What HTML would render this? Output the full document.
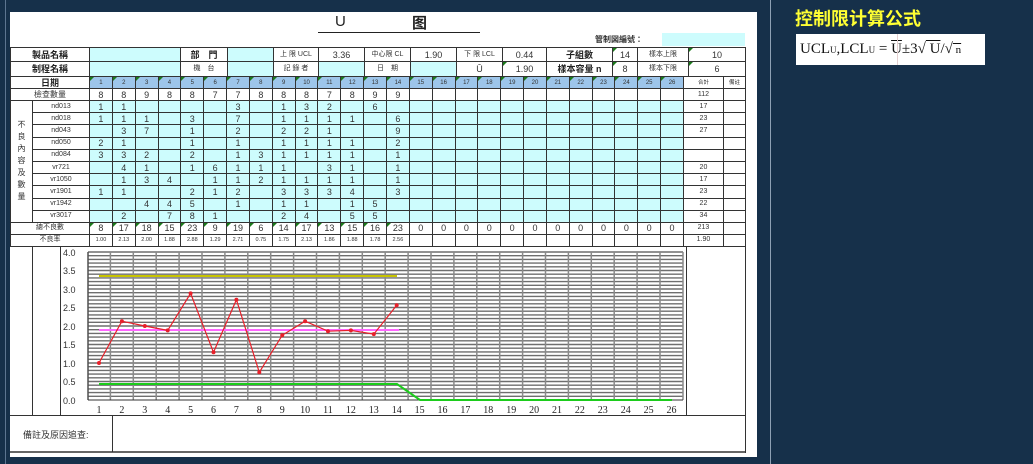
<!DOCTYPE html>
<html><head><meta charset="utf-8">
<style>
*{margin:0;padding:0;box-sizing:border-box}
body{width:1033px;height:464px;background:#16304a;position:relative;overflow:hidden;font-family:"Liberation Sans","Noto Sans CJK TC",sans-serif}
.panel{position:absolute;left:10px;top:12px;width:747px;height:445px;background:#fff}
table{border-collapse:collapse;table-layout:fixed;position:absolute;font-size:9px;color:#333}
td{border:1px solid #333;text-align:center;padding:0;overflow:hidden;white-space:nowrap;line-height:10px;position:relative}
.c{background:#cdfcfd}
.b{background:#9dc5ea;font-size:6px}
.t::before{content:"";position:absolute;left:0;top:0;border-top:4px solid #1a7a1a;border-right:4px solid transparent}
.h{font-size:9px;font-weight:bold;color:#222}
.s{font-size:7px}
.xs{font-size:5.5px}
</style></head><body>
<div style="position:absolute;left:5px;top:0;width:1px;height:464px;background:#5d7590"></div>
<div style="position:absolute;left:770px;top:0;width:1px;height:464px;background:#8ea0b4"></div>
<div class="panel"></div>
<div style="position:absolute;left:335px;top:13px;font-size:15px;color:#222">U</div>
<div style="position:absolute;left:412px;top:12px;font-size:15px;font-weight:bold;color:#222;font-family:'Noto Sans CJK SC',sans-serif">图</div>
<div style="position:absolute;left:318px;top:32px;width:162px;height:1px;background:#222"></div>
<div style="position:absolute;left:595px;top:34px;font-size:8px;font-weight:bold;color:#333">管制図編號：</div>
<div style="position:absolute;left:662px;top:33px;width:83px;height:13px;background:#cdfcfd"></div>

<table style="left:10px;top:47px;width:735px">
<colgroup><col style="width:79px"><col style="width:91px"><col style="width:47px"><col style="width:46px"><col style="width:45px"><col style="width:46px"><col style="width:46px"><col style="width:46px"><col style="width:46px"><col style="width:44px"><col style="width:66px"><col style="width:25px"><col style="width:51px"><col style="width:57px"></colgroup>
<tr style="height:14px"><td class="h">製品名稱</td><td class="c"></td><td class="h">部　門</td><td class="c"></td><td class="s">上 限 UCL</td><td>3.36</td><td class="s">中心限 CL</td><td>1.90</td><td class="s">下 限 LCL</td><td>0.44</td><td class="h">子組數</td><td class="t">14</td><td class="s">樣本上限</td><td class="t">10</td></tr>
<tr style="height:15px"><td class="h">制程名稱</td><td class="c"></td><td class="s">機　台</td><td class="c"></td><td class="s">記 錄 者</td><td class="c"></td><td class="s">日　期</td><td class="c"></td><td>Ū</td><td class="t">1.90</td><td class="h">樣本容量 n</td><td class="t">8</td><td class="s">樣本下限</td><td class="t">6</td></tr>
</table>

<table style="left:10px;top:76px;width:735px">
<colgroup><col style="width:22px"><col style="width:57px">
<col style="width:22.85px"><col style="width:22.85px"><col style="width:22.85px"><col style="width:22.85px"><col style="width:22.85px"><col style="width:22.85px"><col style="width:22.85px"><col style="width:22.85px"><col style="width:22.85px"><col style="width:22.85px"><col style="width:22.85px"><col style="width:22.85px"><col style="width:22.85px"><col style="width:22.85px"><col style="width:22.85px"><col style="width:22.85px"><col style="width:22.85px"><col style="width:22.85px"><col style="width:22.85px"><col style="width:22.85px"><col style="width:22.85px"><col style="width:22.85px"><col style="width:22.85px"><col style="width:22.85px"><col style="width:22.85px"><col style="width:22.85px">
<col style="width:40px"><col style="width:22px"></colgroup>
<tr style="height:12px"><td colspan="2" class="h">日期</td><td class="b t">1</td><td class="b t">2</td><td class="b t">3</td><td class="b t">4</td><td class="b t">5</td><td class="b t">6</td><td class="b t">7</td><td class="b t">8</td><td class="b t">9</td><td class="b t">10</td><td class="b t">11</td><td class="b t">12</td><td class="b t">13</td><td class="b t">14</td><td class="b t">15</td><td class="b t">16</td><td class="b t">17</td><td class="b t">18</td><td class="b t">19</td><td class="b t">20</td><td class="b t">21</td><td class="b t">22</td><td class="b t">23</td><td class="b t">24</td><td class="b t">25</td><td class="b t">26</td><td class="xs">合計</td><td class="xs">備註</td></tr>
<tr style="height:12px"><td colspan="2" style="font-size:8px">檢查數量</td><td>8</td><td>8</td><td>9</td><td>8</td><td>8</td><td>7</td><td>7</td><td>8</td><td>8</td><td>8</td><td>7</td><td>8</td><td>9</td><td>9</td><td></td><td></td><td></td><td></td><td></td><td></td><td></td><td></td><td></td><td></td><td></td><td></td><td class="s">112</td><td></td></tr>
<tr style="height:12.2px"><td rowspan="10" style="font-size:8px;line-height:12px;white-space:normal;padding-top:0">不<br>良<br>內<br>容<br>及<br>數<br>量</td><td class="s">nd013</td><td class="c">1</td><td class="c">1</td><td class="c"></td><td class="c"></td><td class="c"></td><td class="c"></td><td class="c">3</td><td class="c"></td><td class="c">1</td><td class="c">3</td><td class="c">2</td><td class="c"></td><td class="c">6</td><td class="c"></td><td class="c"></td><td class="c"></td><td class="c"></td><td class="c"></td><td class="c"></td><td class="c"></td><td class="c"></td><td class="c"></td><td class="c"></td><td class="c"></td><td class="c"></td><td class="c"></td><td class="s">17</td><td></td></tr>
<tr style="height:12.2px"><td class="s">nd018</td><td class="c">1</td><td class="c">1</td><td class="c">1</td><td class="c"></td><td class="c">3</td><td class="c"></td><td class="c">7</td><td class="c"></td><td class="c">1</td><td class="c">1</td><td class="c">1</td><td class="c">1</td><td class="c"></td><td class="c">6</td><td class="c"></td><td class="c"></td><td class="c"></td><td class="c"></td><td class="c"></td><td class="c"></td><td class="c"></td><td class="c"></td><td class="c"></td><td class="c"></td><td class="c"></td><td class="c"></td><td class="s">23</td><td></td></tr>
<tr style="height:12.2px"><td class="s">nd043</td><td class="c"></td><td class="c">3</td><td class="c">7</td><td class="c"></td><td class="c">1</td><td class="c"></td><td class="c">2</td><td class="c"></td><td class="c">2</td><td class="c">2</td><td class="c">1</td><td class="c"></td><td class="c"></td><td class="c">9</td><td class="c"></td><td class="c"></td><td class="c"></td><td class="c"></td><td class="c"></td><td class="c"></td><td class="c"></td><td class="c"></td><td class="c"></td><td class="c"></td><td class="c"></td><td class="c"></td><td class="s">27</td><td></td></tr>
<tr style="height:12.2px"><td class="s">nd050</td><td class="c">2</td><td class="c">1</td><td class="c"></td><td class="c"></td><td class="c">1</td><td class="c"></td><td class="c">1</td><td class="c"></td><td class="c">1</td><td class="c">1</td><td class="c">1</td><td class="c">1</td><td class="c"></td><td class="c">2</td><td class="c"></td><td class="c"></td><td class="c"></td><td class="c"></td><td class="c"></td><td class="c"></td><td class="c"></td><td class="c"></td><td class="c"></td><td class="c"></td><td class="c"></td><td class="c"></td><td></td><td></td></tr>
<tr style="height:12.2px"><td class="s">nd084</td><td class="c">3</td><td class="c">3</td><td class="c">2</td><td class="c"></td><td class="c">2</td><td class="c"></td><td class="c">1</td><td class="c">3</td><td class="c">1</td><td class="c">1</td><td class="c">1</td><td class="c">1</td><td class="c"></td><td class="c">1</td><td class="c"></td><td class="c"></td><td class="c"></td><td class="c"></td><td class="c"></td><td class="c"></td><td class="c"></td><td class="c"></td><td class="c"></td><td class="c"></td><td class="c"></td><td class="c"></td><td></td><td></td></tr>
<tr style="height:12.2px"><td class="s">vr721</td><td class="c"></td><td class="c">4</td><td class="c">1</td><td class="c"></td><td class="c">1</td><td class="c">6</td><td class="c">1</td><td class="c">1</td><td class="c">1</td><td class="c"></td><td class="c">3</td><td class="c">1</td><td class="c"></td><td class="c">1</td><td class="c"></td><td class="c"></td><td class="c"></td><td class="c"></td><td class="c"></td><td class="c"></td><td class="c"></td><td class="c"></td><td class="c"></td><td class="c"></td><td class="c"></td><td class="c"></td><td class="s">20</td><td></td></tr>
<tr style="height:12.2px"><td class="s">vr1050</td><td class="c"></td><td class="c">1</td><td class="c">3</td><td class="c">4</td><td class="c"></td><td class="c">1</td><td class="c">1</td><td class="c">2</td><td class="c">1</td><td class="c">1</td><td class="c">1</td><td class="c">1</td><td class="c"></td><td class="c">1</td><td class="c"></td><td class="c"></td><td class="c"></td><td class="c"></td><td class="c"></td><td class="c"></td><td class="c"></td><td class="c"></td><td class="c"></td><td class="c"></td><td class="c"></td><td class="c"></td><td class="s">17</td><td></td></tr>
<tr style="height:12.2px"><td class="s">vr1901</td><td class="c">1</td><td class="c">1</td><td class="c"></td><td class="c"></td><td class="c">2</td><td class="c">1</td><td class="c">2</td><td class="c"></td><td class="c">3</td><td class="c">3</td><td class="c">3</td><td class="c">4</td><td class="c"></td><td class="c">3</td><td class="c"></td><td class="c"></td><td class="c"></td><td class="c"></td><td class="c"></td><td class="c"></td><td class="c"></td><td class="c"></td><td class="c"></td><td class="c"></td><td class="c"></td><td class="c"></td><td class="s">23</td><td></td></tr>
<tr style="height:12.2px"><td class="s">vr1942</td><td class="c"></td><td class="c"></td><td class="c">4</td><td class="c">4</td><td class="c">5</td><td class="c"></td><td class="c">1</td><td class="c"></td><td class="c">1</td><td class="c">1</td><td class="c"></td><td class="c">1</td><td class="c">5</td><td class="c"></td><td class="c"></td><td class="c"></td><td class="c"></td><td class="c"></td><td class="c"></td><td class="c"></td><td class="c"></td><td class="c"></td><td class="c"></td><td class="c"></td><td class="c"></td><td class="c"></td><td class="s">22</td><td></td></tr>
<tr style="height:12.2px"><td class="s">vr3017</td><td class="c"></td><td class="c">2</td><td class="c"></td><td class="c">7</td><td class="c">8</td><td class="c">1</td><td class="c"></td><td class="c"></td><td class="c">2</td><td class="c">4</td><td class="c"></td><td class="c">5</td><td class="c">5</td><td class="c"></td><td class="c"></td><td class="c"></td><td class="c"></td><td class="c"></td><td class="c"></td><td class="c"></td><td class="c"></td><td class="c"></td><td class="c"></td><td class="c"></td><td class="c"></td><td class="c"></td><td class="s">34</td><td></td></tr>
<tr style="height:12px"><td colspan="2" class="s">總不良數</td><td class="t">8</td><td class="t">17</td><td class="t">18</td><td class="t">15</td><td class="t">23</td><td class="t">9</td><td class="t">19</td><td class="t">6</td><td class="t">14</td><td class="t">17</td><td class="t">13</td><td class="t">15</td><td class="t">16</td><td class="t">23</td><td>0</td><td>0</td><td>0</td><td>0</td><td>0</td><td>0</td><td>0</td><td>0</td><td>0</td><td>0</td><td>0</td><td>0</td><td class="s">213</td><td></td></tr>
<tr style="height:12px"><td colspan="2" class="s">不良率</td><td class="xs">1.00</td><td class="xs">2.13</td><td class="xs">2.00</td><td class="xs">1.88</td><td class="xs">2.88</td><td class="xs">1.29</td><td class="xs">2.71</td><td class="xs">0.75</td><td class="xs">1.75</td><td class="xs">2.13</td><td class="xs">1.86</td><td class="xs">1.88</td><td class="xs">1.78</td><td class="xs">2.56</td><td></td><td></td><td></td><td></td><td></td><td></td><td></td><td></td><td></td><td></td><td></td><td></td><td class="s">1.90</td><td></td></tr>
</table>

<svg style="position:absolute;left:0;top:0" width="1033" height="464">
<g stroke="#333" stroke-width="1" fill="none">
<line x1="32.5" y1="246" x2="32.5" y2="415"/><line x1="60.5" y1="246" x2="60.5" y2="415"/>
<line x1="686.5" y1="246" x2="686.5" y2="415"/><line x1="745.5" y1="246" x2="745.5" y2="453"/>
<line x1="10" y1="415.5" x2="746" y2="415.5"/><line x1="112.5" y1="415" x2="112.5" y2="452"/>
<line x1="10" y1="452" x2="746" y2="452" stroke-width="1.5"/>
</g>
<g stroke="#6e6e6e" stroke-width="1.4">
<line x1="88" y1="252" x2="683" y2="252"/><line x1="88" y1="255.7" x2="683" y2="255.7"/><line x1="88" y1="259.4" x2="683" y2="259.4"/><line x1="88" y1="263.1" x2="683" y2="263.1"/><line x1="88" y1="266.8" x2="683" y2="266.8"/><line x1="88" y1="270.5" x2="683" y2="270.5"/><line x1="88" y1="274.2" x2="683" y2="274.2"/><line x1="88" y1="277.9" x2="683" y2="277.9"/><line x1="88" y1="281.6" x2="683" y2="281.6"/><line x1="88" y1="285.3" x2="683" y2="285.3"/><line x1="88" y1="289" x2="683" y2="289"/><line x1="88" y1="292.7" x2="683" y2="292.7"/><line x1="88" y1="296.4" x2="683" y2="296.4"/><line x1="88" y1="300.1" x2="683" y2="300.1"/><line x1="88" y1="303.8" x2="683" y2="303.8"/><line x1="88" y1="307.5" x2="683" y2="307.5"/><line x1="88" y1="311.2" x2="683" y2="311.2"/><line x1="88" y1="314.9" x2="683" y2="314.9"/><line x1="88" y1="318.6" x2="683" y2="318.6"/><line x1="88" y1="322.3" x2="683" y2="322.3"/><line x1="88" y1="326" x2="683" y2="326"/><line x1="88" y1="329.7" x2="683" y2="329.7"/><line x1="88" y1="333.4" x2="683" y2="333.4"/><line x1="88" y1="337.1" x2="683" y2="337.1"/><line x1="88" y1="340.8" x2="683" y2="340.8"/><line x1="88" y1="344.5" x2="683" y2="344.5"/><line x1="88" y1="348.2" x2="683" y2="348.2"/><line x1="88" y1="351.9" x2="683" y2="351.9"/><line x1="88" y1="355.6" x2="683" y2="355.6"/><line x1="88" y1="359.3" x2="683" y2="359.3"/><line x1="88" y1="363" x2="683" y2="363"/><line x1="88" y1="366.7" x2="683" y2="366.7"/><line x1="88" y1="370.4" x2="683" y2="370.4"/><line x1="88" y1="374.1" x2="683" y2="374.1"/><line x1="88" y1="377.8" x2="683" y2="377.8"/><line x1="88" y1="381.5" x2="683" y2="381.5"/><line x1="88" y1="385.2" x2="683" y2="385.2"/><line x1="88" y1="388.9" x2="683" y2="388.9"/><line x1="88" y1="392.6" x2="683" y2="392.6"/><line x1="88" y1="396.3" x2="683" y2="396.3"/>
</g>
<g stroke="#8a8a8a" stroke-width="1.5">
<line x1="88" y1="252" x2="88" y2="400"/><line x1="110.4" y1="252" x2="110.4" y2="400"/><line x1="133.3" y1="252" x2="133.3" y2="400"/><line x1="156.2" y1="252" x2="156.2" y2="400"/><line x1="179.1" y1="252" x2="179.1" y2="400"/><line x1="202" y1="252" x2="202" y2="400"/><line x1="224.9" y1="252" x2="224.9" y2="400"/><line x1="247.8" y1="252" x2="247.8" y2="400"/><line x1="270.7" y1="252" x2="270.7" y2="400"/><line x1="293.6" y1="252" x2="293.6" y2="400"/><line x1="316.5" y1="252" x2="316.5" y2="400"/><line x1="339.4" y1="252" x2="339.4" y2="400"/><line x1="362.3" y1="252" x2="362.3" y2="400"/><line x1="385.2" y1="252" x2="385.2" y2="400"/><line x1="408.1" y1="252" x2="408.1" y2="400"/><line x1="431" y1="252" x2="431" y2="400"/><line x1="453.9" y1="252" x2="453.9" y2="400"/><line x1="476.8" y1="252" x2="476.8" y2="400"/><line x1="499.7" y1="252" x2="499.7" y2="400"/><line x1="522.6" y1="252" x2="522.6" y2="400"/><line x1="545.5" y1="252" x2="545.5" y2="400"/><line x1="568.4" y1="252" x2="568.4" y2="400"/><line x1="591.3" y1="252" x2="591.3" y2="400"/><line x1="614.2" y1="252" x2="614.2" y2="400"/><line x1="637.1" y1="252" x2="637.1" y2="400"/><line x1="660" y1="252" x2="660" y2="400"/><line x1="683" y1="252" x2="683" y2="400"/>
</g>
<line x1="88" y1="400" x2="683" y2="400" stroke="#333"/>
<line x1="88" y1="252" x2="88" y2="400" stroke="#333"/>
<line x1="99" y1="276" x2="397" y2="276" stroke="#c8c400" stroke-width="2"/>
<line x1="99" y1="330" x2="399" y2="330" stroke="#ff66ff" stroke-width="2"/>
<polyline points="99,384 397,384 420,400 672,400" fill="none" stroke="#1ccc1c" stroke-width="2"/>
<polyline fill="none" stroke="#e8202a" stroke-width="1.2" points="99,363 121.9,321.2 144.8,326 167.7,330.4 190.6,293.4 213.5,352.3 236.4,299.7 259.3,372.3 282.2,335.3 305.1,321.2 328,331.2 350.9,330.4 373.8,334.1 396.7,305.3"/>
<g fill="#e8202a"><circle cx="99" cy="363" r="2"/><circle cx="121.9" cy="321.2" r="2"/><circle cx="144.8" cy="326" r="2"/><circle cx="167.7" cy="330.4" r="2"/><circle cx="190.6" cy="293.4" r="2"/><circle cx="213.5" cy="352.3" r="2"/><circle cx="236.4" cy="299.7" r="2"/><circle cx="259.3" cy="372.3" r="2"/><circle cx="282.2" cy="335.3" r="2"/><circle cx="305.1" cy="321.2" r="2"/><circle cx="328" cy="331.2" r="2"/><circle cx="350.9" cy="330.4" r="2"/><circle cx="373.8" cy="334.1" r="2"/><circle cx="396.7" cy="305.3" r="2"/></g>
<g font-family="Liberation Sans,sans-serif" font-size="9" fill="#333">
<text x="63" y="256">4.0</text><text x="63" y="274">3.5</text><text x="63" y="293">3.0</text><text x="63" y="311">2.5</text><text x="63" y="330">2.0</text><text x="63" y="348">1.5</text><text x="63" y="367">1.0</text><text x="63" y="385">0.5</text><text x="63" y="404">0.0</text>
</g>
<g font-family="Liberation Serif,serif" font-size="10" fill="#222" text-anchor="middle">
<text x="99" y="413">1</text><text x="121.9" y="413">2</text><text x="144.8" y="413">3</text><text x="167.7" y="413">4</text><text x="190.6" y="413">5</text><text x="213.5" y="413">6</text><text x="236.4" y="413">7</text><text x="259.3" y="413">8</text><text x="282.2" y="413">9</text><text x="305.1" y="413">10</text><text x="328" y="413">11</text><text x="350.9" y="413">12</text><text x="373.8" y="413">13</text><text x="396.7" y="413">14</text><text x="419.6" y="413">15</text><text x="442.5" y="413">16</text><text x="465.4" y="413">17</text><text x="488.3" y="413">18</text><text x="511.2" y="413">19</text><text x="534.1" y="413">20</text><text x="557" y="413">21</text><text x="579.9" y="413">22</text><text x="602.8" y="413">23</text><text x="625.7" y="413">24</text><text x="648.6" y="413">25</text><text x="671.5" y="413">26</text>
</g>
<text x="23" y="438" font-family="Liberation Sans,Noto Sans CJK TC,sans-serif" font-size="9" fill="#333">備註及原因追查:</text>
</svg>

<div style="position:absolute;left:795px;top:5px;font-size:18px;font-weight:bold;color:#ffff33;font-family:'Noto Sans CJK SC',sans-serif">控制限计算公式</div>
<div style="position:absolute;left:796px;top:34px;width:189px;height:31px;background:#fff;font-family:'Liberation Serif',serif;font-size:15px;color:#111;line-height:31px;padding-left:4px;white-space:nowrap">UCL<span style="font-size:9px">U</span>,LCL<span style="font-size:9px">U</span> = <span style="text-decoration:overline">U</span>±3√<span style="text-decoration:overline">&nbsp;U</span>/√<span style="text-decoration:overline;font-size:11px">&nbsp;n</span></div>
<div style="position:absolute;left:897px;top:34px;width:1px;height:31px;background:#e4d0d0"></div>
</body></html>
